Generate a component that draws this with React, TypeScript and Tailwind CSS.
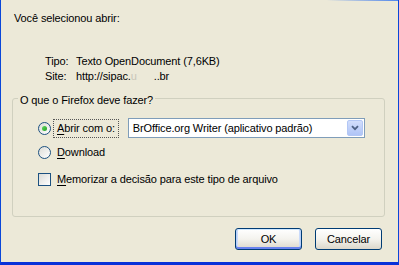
import type { ReactNode } from "react";

function Radio({ checked }: { checked?: boolean }) {
  return (
    <span className="flex h-[13px] w-[13px] shrink-0 items-center justify-center rounded-full border border-[#1C5180] bg-gradient-to-br from-[#DCDCD7] to-[#FFFFFF]">
      {checked && (
        <span className="h-[5px] w-[5px] rounded-full bg-gradient-to-br from-[#5FD65F] to-[#21A121]" />
      )}
    </span>
  );
}

function Checkbox() {
  return (
    <span className="h-[13px] w-[13px] shrink-0 border border-[#1C5180] bg-gradient-to-br from-[#DCDCD7] to-[#FFFFFF]" />
  );
}

function Accel({ children }: { children: ReactNode }) {
  return <span className="underline underline-offset-[2px]">{children}</span>;
}

function XpButton({ children, primary }: { children: ReactNode; primary?: boolean }) {
  return (
    <button
      type="button"
      className={`flex h-[22px] w-[67px] items-center justify-center rounded-[3px] border border-[#003C74] bg-gradient-to-b from-[#FFFFFF] via-[#F4F3EE] to-[#DCD7CB] text-black ${
        primary
          ? "shadow-[inset_0_1px_0_#CEE7FF,inset_0_-2px_0_#6982EE,inset_1px_0_0_#B8D0F9,inset_-1px_0_0_#B8D0F9,inset_2px_0_0_#CADBFB,inset_-2px_0_0_#CADBFB]"
          : ""
      }`}
    >
      {children}
    </button>
  );
}

export default function App() {
  return (
    <div className="flex h-[265px] w-[399px] flex-col border-x border-b-[3px] border-x-[#0A47D9] border-b-[#0831D9] bg-[#ECE9D8] font-['Liberation_Sans',Arial,sans-serif] text-[11px] leading-[13px] tracking-[-0.12px] text-black">
      <div className="h-px w-full shrink-0 bg-gradient-to-r from-transparent from-[82%] to-[#4F86EC]" />

      <p className="mt-[11px] pl-[13px]">Você selecionou abrir:</p>

      <div className="mt-[30px] grid grid-cols-[31px_1fr] gap-y-[2px] pl-[44px]">
        <span>Tipo:</span>
        <span>Texto OpenDocument (7,6KB)</span>
        <span>Site:</span>
        <span>
          http://sipac.<span className="text-[#C9C6B8]">u</span>
          <span className="inline-block w-[17px]" />..br
        </span>
      </div>

      <fieldset className="ml-[11px] mt-[7px] w-[373px] rounded-[3px] border border-[#D0D0BF] px-[5px] pb-[30px]">
        <legend className="px-[2px] pt-[4px]">O que o Firefox deve fazer?</legend>

        <div className="mt-[11px] flex h-[20px] items-center pl-[20px]">
          <Radio checked />
          <span className="ml-[2px] flex h-[19px] items-center border border-dotted border-[#555] px-[3px]">
            <span>
              <Accel>A</Accel>brir com o:
            </span>
          </span>
          <div className="ml-[9px] flex h-[20px] w-[237px] items-center border border-[#7F9DB9] bg-white">
            <span className="flex-1 truncate pl-[4px]">BrOffice.org Writer (aplicativo padrão)</span>
            <span className="mr-px flex h-[16px] w-[16px] items-center justify-center rounded-[2px] border border-[#B3C7F5] bg-gradient-to-b from-[#D2DEFC] to-[#AFC4F6]">
              <svg width="8" height="6" viewBox="0 0 8 6">
                <path d="M1 1.2 L4 4.2 L7 1.2" fill="none" stroke="#4D6185" strokeWidth="1.8" />
              </svg>
            </span>
          </div>
        </div>

        <div className="mt-[8px] flex h-[13px] items-center gap-[6px] pl-[20px]">
          <Radio />
          <span>
            <Accel>D</Accel>ownload
          </span>
        </div>

        <div className="mt-[14px] flex h-[13px] items-center gap-[6px] pl-[20px]">
          <Checkbox />
          <span>
            <Accel>M</Accel>emorizar a decisão para este tipo de arquivo
          </span>
        </div>
      </fieldset>

      <div className="mt-[11px] flex justify-end gap-[13px] pr-[16px]">
        <XpButton primary>OK</XpButton>
        <XpButton>Cancelar</XpButton>
      </div>
    </div>
  );
}
